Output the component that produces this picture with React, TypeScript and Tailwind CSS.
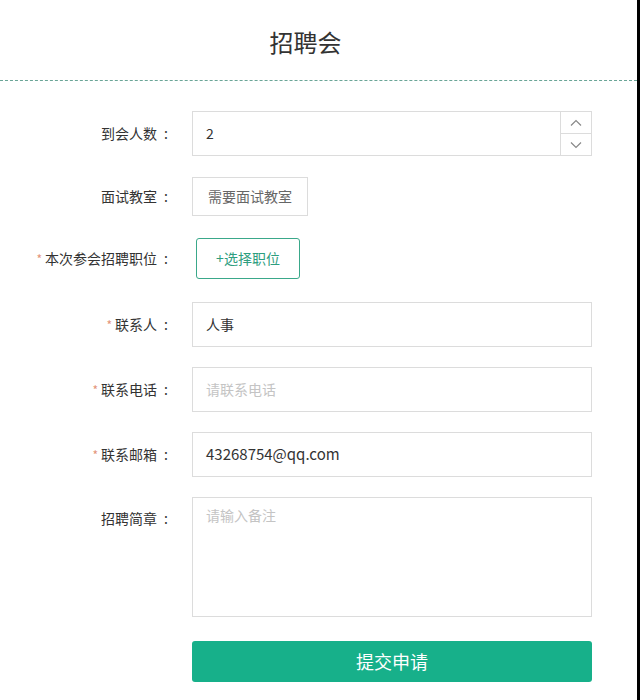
import React from "react";

const font = { fontFamily: '"Noto Sans CJK SC", "Noto Sans", sans-serif' };

const Label = ({ text, required }: { text: string; required?: boolean }) => (
  <div className="w-[168px] shrink-0 text-right text-[14px] text-[#333]">
    {required && <span className="mr-[3px] text-[12px] text-[#e3947a]">*</span>}
    {text}
    <span className="inline-block w-[11px] text-right">:</span>
  </div>
);

const Row = ({
  label,
  required,
  className,
  top,
  children,
}: {
  label: string;
  required?: boolean;
  className?: string;
  top?: boolean;
  children: React.ReactNode;
}) => (
  <div className={`flex ${top ? "items-start" : "items-center"} ${className ?? ""}`}>
    <div className={top ? "pt-[11px]" : ""}>
      <Label text={label} required={required} />
    </div>
    <div className="ml-6">{children}</div>
  </div>
);

export default function App() {
  return (
    <div className="min-h-[700px] w-[640px] border-r-[3px] border-black bg-white" style={font}>
      <div className="flex h-[81px] items-center justify-center border-b border-dashed border-[#6aa597] pr-[26px]">
        <h1 className="mt-[3px] text-[24px] text-[#333]">招聘会</h1>
      </div>

      <div className="pt-[30px]">
        <Row label="到会人数">
          <div className="flex h-[45px] w-[400px] border border-[#dcdcdc]">
            <div className="flex flex-1 items-center pl-[13px] text-[14px] text-[#333]">2</div>
            <div className="flex w-[31px] flex-col border-l border-[#dcdcdc]">
              <div className="flex flex-1 items-center justify-center border-b border-[#dcdcdc]">
                <svg width="12" height="8" viewBox="0 0 12 8" fill="none" stroke="#888" strokeWidth="1.2">
                  <path d="M1 6.5L6 1.5L11 6.5" />
                </svg>
              </div>
              <div className="flex flex-1 items-center justify-center">
                <svg width="12" height="8" viewBox="0 0 12 8" fill="none" stroke="#888" strokeWidth="1.2">
                  <path d="M1 1.5L6 6.5L11 1.5" />
                </svg>
              </div>
            </div>
          </div>
        </Row>

        <Row label="面试教室" className="mt-[21px]">
          <div className="flex h-[39px] w-[116px] items-center justify-center border border-[#dcdcdc] text-[14px] text-[#666]">
            需要面试教室
          </div>
        </Row>

        <Row label="本次参会招聘职位" required className="mt-[22px]">
          <div className="ml-1 flex h-[41px] w-[104px] items-center justify-center rounded-[3px] border border-[#3aa88a] text-[14px] text-[#2e9e80]">
            +选择职位
          </div>
        </Row>

        <Row label="联系人" required className="mt-[23px]">
          <div className="flex h-[45px] w-[400px] items-center border border-[#dcdcdc] pl-[13px] text-[14px] text-[#333]">
            人事
          </div>
        </Row>

        <Row label="联系电话" required className="mt-[20px]">
          <div className="flex h-[45px] w-[400px] items-center border border-[#dcdcdc] pl-[13px] text-[14px] text-[#c4c4c4]">
            请联系电话
          </div>
        </Row>

        <Row label="联系邮箱" required className="mt-[20px]">
          <div className="flex h-[45px] w-[400px] items-center border border-[#dcdcdc] pl-[13px] text-[15px] text-[#333]">
            43268754@qq.com
          </div>
        </Row>

        <Row label="招聘简章" top className="mt-[20px]">
          <div className="h-[120px] w-[400px] border border-[#dcdcdc] pl-[13px] pt-[7px] text-[14px] text-[#c4c4c4]">
            请输入备注
          </div>
        </Row>

        <div className="mt-[24px] flex">
          <div className="w-[168px] shrink-0" />
          <button className="ml-6 flex h-[41px] w-[400px] items-center justify-center rounded-[3px] bg-[#17b08a] text-[18px] text-white">
            提交申请
          </button>
        </div>
      </div>
    </div>
  );
}
